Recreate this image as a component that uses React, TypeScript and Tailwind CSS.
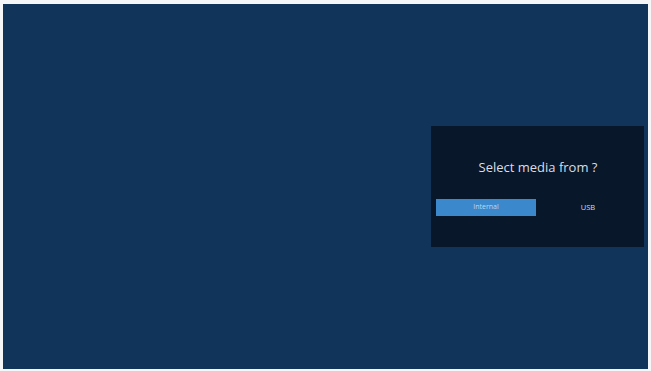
export default function App() {
  return (
    <div className="w-[651px] h-[371px] bg-[#f4f6f8] pl-[3px] pr-[3px] pt-[4px] pb-[2px]" style={{ fontFamily: '"Open Sans", "Noto Sans", sans-serif' }}>
      <div className="w-full h-full bg-[#10345a] flex items-center justify-end pr-[4px]">
        <div className="w-[213px] h-[121px] bg-[#08172a] flex flex-col items-center pt-[32px]">
          <div className="text-[13px] text-[#d8dee6] leading-[18px] pl-[1px]">Select media from ?</div>
          <div className="w-full flex items-center mt-[23px] pl-[5px]">
            <div className="w-[100px] h-[17px] bg-[#3b88cc] flex items-center justify-center text-[7px] text-[#bcd8f2]">Internal</div>
            <div className="flex-1 text-center text-[7.5px] text-[#d4dbe3] pr-[4px]">USB</div>
          </div>
        </div>
      </div>
    </div>
  );
}
